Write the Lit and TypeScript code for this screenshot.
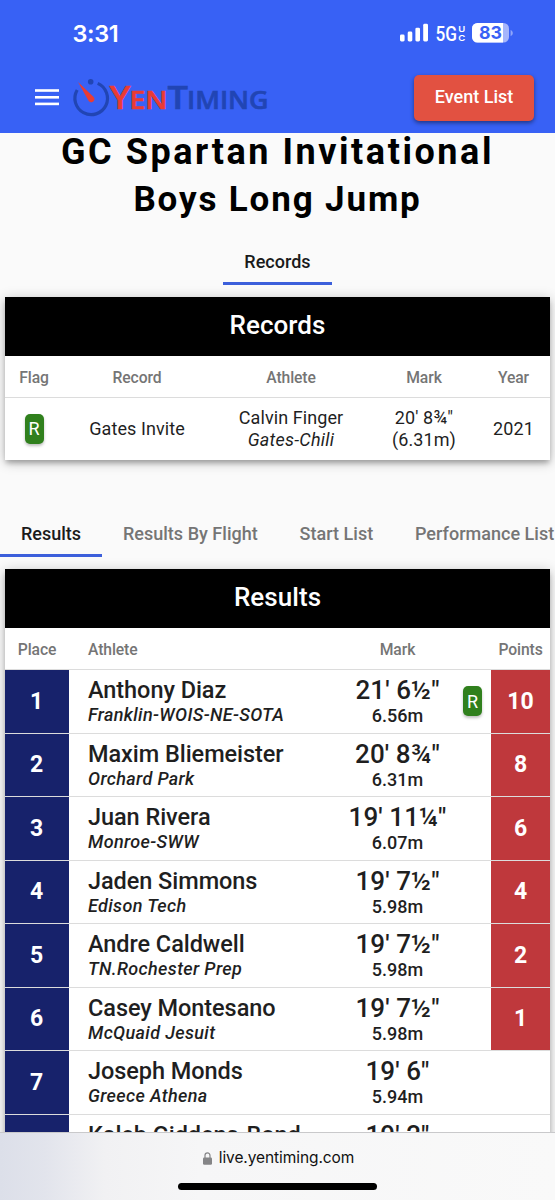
import { LitElement, html, css, nothing } from "lit";
import { customElement, property } from "lit/decorators.js";

interface Result {
  place: number;
  name: string;
  team: string;
  mark: string;
  metric: string;
  points?: number;
  record?: boolean;
}

const RESULTS: Result[] = [
  { place: 1, name: "Anthony Diaz", team: "Franklin-WOIS-NE-SOTA", mark: `21' 6½"`, metric: "6.56m", points: 10, record: true },
  { place: 2, name: "Maxim Bliemeister", team: "Orchard Park", mark: `20' 8¾"`, metric: "6.31m", points: 8 },
  { place: 3, name: "Juan Rivera", team: "Monroe-SWW", mark: `19' 11¼"`, metric: "6.07m", points: 6 },
  { place: 4, name: "Jaden Simmons", team: "Edison Tech", mark: `19' 7½"`, metric: "5.98m", points: 4 },
  { place: 5, name: "Andre Caldwell", team: "TN.Rochester Prep", mark: `19' 7½"`, metric: "5.98m", points: 2 },
  { place: 6, name: "Casey Montesano", team: "McQuaid Jesuit", mark: `19' 7½"`, metric: "5.98m", points: 1 },
  { place: 7, name: "Joseph Monds", team: "Greece Athena", mark: `19' 6"`, metric: "5.94m" },
  { place: 8, name: "Kaleb Giddens-Bond", team: "", mark: `19' 2"`, metric: "" },
];

@customElement("record-flag")
class RecordFlag extends LitElement {
  static styles = css`
    :host {
      display: flex;
      align-items: center;
      justify-content: center;
      width: 19px;
      height: 30px;
      border-radius: 5px;
      background: #30801d;
      color: #fff;
      font-size: 18px;
      font-weight: 400;
      box-shadow: 0 2px 3px rgba(0, 0, 0, 0.25);
    }
  `;
  render() {
    return html`R`;
  }
}

@customElement("status-bar")
class StatusBar extends LitElement {
  static styles = css`
    :host {
      display: flex;
      justify-content: space-between;
      height: 62px;
      color: #fff;
    }
    svg {
      display: block;
    }
    .time {
      margin: 19px 0 0 72.5px;
      font: 600 23.5px/29px Inter, sans-serif;
      letter-spacing: -0.4px;
    }
    .right {
      margin: 20px 40px 0 0;
    }
    .net {
      font: 500 19.5px Roboto, sans-serif;
    }
    .sub {
      font: 600 8px Inter, sans-serif;
    }
    .level {
      font: 700 18px Inter, sans-serif;
    }
  `;
  render() {
    return html`
      <div class="time">3:31</div>
      <svg class="right" width="116" height="26" viewBox="399 20 116 26">
        <g fill="#fff">
          <rect x="400" y="34.5" width="4.6" height="7" rx="1.4" />
          <rect x="407.7" y="31.5" width="4.6" height="10" rx="1.4" />
          <rect x="415.4" y="27.7" width="4.6" height="13.8" rx="1.4" />
          <rect x="423.2" y="23.8" width="4.8" height="17.7" rx="1.4" />
          <text class="net" x="435.5" y="40.9" textLength="21.5" lengthAdjust="spacingAndGlyphs">5G</text>
          <text class="sub" x="458.3" y="32.4" textLength="7" lengthAdjust="spacingAndGlyphs">U</text>
          <text class="sub" x="458.3" y="40.9" textLength="7" lengthAdjust="spacingAndGlyphs">C</text>
        </g>
        <clipPath id="b"><rect x="472" y="23" width="37" height="19.6" rx="5.5" /></clipPath>
        <g clip-path="url(#b)">
          <rect x="472" y="23" width="37" height="20" fill="#a5b6fb" />
          <rect x="472" y="23" width="31" height="20" fill="#fff" />
        </g>
        <path d="M510.6 30v6.2c1.4-.5 2.2-1.7 2.2-3.1s-.8-2.6-2.2-3.1z" fill="#8fa5fa" />
        <text class="level" x="479" y="39.3" fill="#3861f5" textLength="23" lengthAdjust="spacingAndGlyphs">83</text>
      </svg>
    `;
  }
}

@customElement("site-logo")
class SiteLogo extends LitElement {
  static styles = css`
    :host {
      display: block;
    }
    svg {
      display: block;
    }
    text {
      font-family: "Open Sans", "Noto Sans", sans-serif;
      font-weight: 600;
      stroke-width: 0.6px;
    }
    .big {
      font-size: 32px;
    }
    .small {
      font-size: 25px;
    }
    .red {
      fill: #ea3b34;
      stroke: #ea3b34;
    }
    .navy {
      fill: #2145b4;
      stroke: #2145b4;
    }
  `;
  render() {
    return html`
      <svg width="198" height="42" viewBox="71 76.5 198 42">
        <path d="M77.2 89.5A16.3 16.3 0 1 0 97.7 82.9" fill="none" stroke="#2145b4" stroke-width="3.2" />
        <circle cx="90.7" cy="81.3" r="2.8" fill="#2145b4" />
        <path d="M78 81.5L93.6 96.5a3 3 0 0 1-4.900 4z" fill="#ea3b34" />
        <text class="big red" x="109.5" y="108" textLength="21" lengthAdjust="spacingAndGlyphs">Y</text>
        <text class="small red" x="129.5" y="108" textLength="38" lengthAdjust="spacingAndGlyphs">EN</text>
        <text class="big navy" x="167.5" y="108" textLength="20.5" lengthAdjust="spacingAndGlyphs">T</text>
        <text class="small navy" x="187" y="108" textLength="81.5" lengthAdjust="spacingAndGlyphs">IMING</text>
      </svg>
    `;
  }
}

@customElement("tab-strip")
class TabStrip extends LitElement {
  @property({ type: Array }) tabs: string[] = [];
  static styles = css`
    :host {
      display: flex;
      height: 47px;
      overflow: hidden;
    }
    .tab {
      flex: none;
      box-sizing: border-box;
      padding: 0 20.9px;
      height: 47px;
      line-height: 48px;
      font-size: 18px;
      font-weight: 500;
      letter-spacing: 0.02px;
      white-space: nowrap;
      color: #757575;
      border-bottom: 3px solid transparent;
    }
    .active {
      color: #1b1b1b;
      border-bottom-color: #3c5fdb;
    }
  `;
  render() {
    return this.tabs.map(
      (t, i) => html`<div class="tab ${i === 0 ? "active" : ""}">${t}</div>`
    );
  }
}

@customElement("app-root")
class AppRoot extends LitElement {
  static styles = css`
    :host {
      display: flex;
      flex-direction: column;
      height: 1200px;
      width: 555px;
      overflow: hidden;
      background: #fafafa;
      font-family: Roboto, sans-serif;
      color: #1f1f1f;
    }
    .top {
      flex: none;
      height: 133px;
      background: #3861f5;
    }
    .nav {
      display: flex;
      align-items: center;
      height: 71px;
      padding: 0 21px 0 35px;
    }
    .menu {
      display: block;
    }
    site-logo {
      margin-left: 12px;
    }
    .button {
      margin-left: auto;
      width: 120px;
      height: 46px;
      border-radius: 5px;
      background: #e25141;
      color: #fff;
      font-size: 18px;
      font-weight: 500;
      line-height: 44px;
      letter-spacing: 0.02px;
      text-align: center;
      box-shadow: 0 2px 4px rgba(0, 0, 0, 0.45);
    }
    .page {
      flex: 1;
      min-height: 0;
      overflow: hidden;
    }
    h1 {
      margin: -5px 0 0;
      font-size: 36px;
      line-height: 48px;
      font-weight: 700;
      letter-spacing: 2.55px;
      text-align: center;
      color: #000;
    }
    .event {
      display: block;
      font-size: 35px;
      letter-spacing: 1.85px;
    }
    .first {
      justify-content: center;
      margin-top: 14px;
    }
    .second {
      margin-top: 50px;
    }
    .card {
      margin: 12px 5px 0;
      width: 545px;
      background: #fff;
      box-shadow: 0 4px 5px -1px rgba(0, 0, 0, 0.25), 0 2px 12px rgba(0, 0, 0, 0.24);
    }
    .title {
      height: 59px;
      background: #000;
      color: #fff;
      font-size: 26px;
      font-weight: 500;
      line-height: 57px;
      letter-spacing: 0.05px;
      text-align: center;
    }
    .grid {
      display: grid;
      align-items: center;
      box-sizing: border-box;
    }
    .records {
      grid-template-columns: 58px 148px 160px 106px 73px;
      justify-items: center;
      text-align: center;
    }
    .results {
      grid-template-columns: 64px 1fr 131px 19px 9px 59px;
    }
    .head {
      height: 42px;
      padding-top: 1px;
      border-bottom: 1px solid #dcdcdc;
      font-size: 15.7px;
      font-weight: 500;
      letter-spacing: -0.1px;
      color: #757575;
    }
    .rec {
      height: 62px;
      padding-bottom: 1px;
      font-size: 18px;
      line-height: 22px;
      letter-spacing: 0.08px;
    }
    .rec em {
      letter-spacing: 0.25px;
    }
    .row {
      height: 63.5px;
      border-bottom: 1px solid #dcdcdc;
      font-weight: 500;
    }
    .place,
    .points {
      align-self: stretch;
      display: flex;
      align-items: center;
      justify-content: center;
      font-size: 23px;
      font-weight: 700;
      color: #fff;
    }
    .place {
      background: #17226b;
      padding-right: 1px;
    }
    .points {
      grid-column: 6;
      background: #bf383c;
    }
    .who {
      padding-left: 19px;
      white-space: nowrap;
    }
    .big {
      font-size: 23.5px;
      line-height: 28px;
      letter-spacing: -0.06px;
    }
    .team {
      font-size: 18px;
      line-height: 22px;
      height: 22px;
      letter-spacing: 0.36px;
      font-style: italic;
    }
    .mark {
      text-align: center;
    }
    .mark .big {
      font-size: 26px;
      letter-spacing: 0.1px;
    }
    .metric {
      font-size: 18px;
      line-height: 24px;
      height: 22px;
    }
    .center {
      text-align: center;
    }
    .browser {
      flex: none;
      height: 68px;
      box-sizing: border-box;
      border-top: 1px solid #c9c9cb;
      background: linear-gradient(90deg, #dcdfe9 0, #e2e4ec 45px, #f1f1f3 105px, #f6f6f7 200px, #f9f9f9 100%);
      display: flex;
      flex-direction: column;
      align-items: center;
    }
    .url {
      display: flex;
      align-items: center;
      gap: 7px;
      margin-top: 13px;
      padding-left: 2px;
      height: 24px;
      font: 400 15.5px/24px Inter, sans-serif;
      letter-spacing: -0.08px;
      color: #111;
    }
    .bar {
      margin-top: 13px;
      width: 199px;
      height: 7px;
      border-radius: 4px;
      background: #000;
    }
  `;

  private row(r: Result) {
    return html`
      <div class="grid results row">
        <div class="place">${r.place}</div>
        <div class="who">
          <div class="big">${r.name}</div>
          <div class="team">${r.team}</div>
        </div>
        <div class="mark">
          <div class="big">${r.mark}</div>
          <div class="metric">${r.metric}</div>
        </div>
        ${r.record ? html`<record-flag></record-flag>` : nothing}
        ${r.points ? html`<div class="points">${r.points}</div>` : nothing}
      </div>
    `;
  }

  render() {
    return html`
      <header class="top">
        <status-bar></status-bar>
        <div class="nav">
          <svg class="menu" width="24" height="17" viewBox="0 0 24 17" fill="#fff">
            <rect y="0.2" width="24" height="2.6" />
            <rect y="7" width="24" height="2.6" />
            <rect y="13.6" width="24" height="2.6" />
          </svg>
          <site-logo></site-logo>
          <div class="button">Event List</div>
        </div>
      </header>
      <main class="page">
        <h1>GC Spartan Invitational<span class="event">Boys Long Jump</span></h1>
        <tab-strip class="first" .tabs=${["Records"]}></tab-strip>
        <section class="card">
          <div class="title">Records</div>
          <div class="grid records head">
            <div>Flag</div><div>Record</div><div>Athlete</div><div>Mark</div><div>Year</div>
          </div>
          <div class="grid records rec">
            <record-flag></record-flag>
            <div>Gates Invite</div>
            <div>Calvin Finger<br /><em>Gates-Chili</em></div>
            <div>20' 8¾"<br />(6.31m)</div>
            <div>2021</div>
          </div>
        </section>
        <tab-strip class="second" .tabs=${["Results", "Results By Flight", "Start List", "Performance List"]}></tab-strip>
        <section class="card">
          <div class="title">Results</div>
          <div class="grid results head">
            <div class="center">Place</div>
            <div class="who">Athlete</div>
            <div class="center">Mark</div>
            <div></div>
            <div></div>
            <div class="center">Points</div>
          </div>
          ${RESULTS.map((r) => this.row(r))}
        </section>
      </main>
      <footer class="browser">
        <div class="url">
          <svg width="9" height="13" viewBox="0 0 9 13">
            <rect x="0" y="5.5" width="9" height="7.3" rx="1.3" fill="#858587" />
            <path d="M2 6V3.5a2.5 2.7 0 0 1 5 0V6" fill="none" stroke="#858587" stroke-width="1.2" />
          </svg>
          <span>live.yentiming.com</span>
        </div>
        <div class="bar"></div>
      </footer>
    `;
  }
}
